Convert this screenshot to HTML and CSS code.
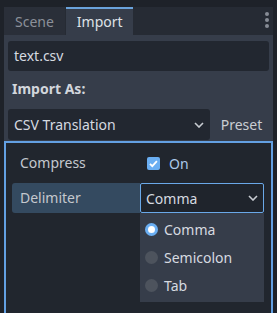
FILE: index.html
```html
<!DOCTYPE html>
<html>
<head>
	<title>Import</title>
	<link rel="stylesheet" href="styles.css">
</head>
<body>
	<div class="dock">
		<div class="tabs">
			<div class="tab">Scene</div>
			<div class="tab tab-active">Import</div>
			<div class="tab-fill">
				<div class="dots"><i></i><i></i><i></i></div>
			</div>
		</div>

		<div class="panel">
			<div class="field">text.csv</div>
			<div class="heading">Import As:</div>
			<div class="import-row">
				<div class="select select-wide">
					<span>CSV Translation</span>
					<svg class="chevron" width="10" height="6" viewBox="0 0 10 6"><path d="M1 1l4 4 4-4" fill="none" stroke="#c8ccd2" stroke-width="1.6"/></svg>
				</div>
				<div class="preset">Preset</div>
			</div>

			<div class="options">
				<div class="prop">
					<div class="prop-name">Compress</div>
					<div class="prop-value">
						<span class="check">
							<svg width="13" height="13" viewBox="0 0 13 13"><rect width="13" height="13" rx="2" fill="#6aaef2"/><path d="M3 6.8l2.3 2.3 4.6-5" fill="none" stroke="#fff" stroke-width="1.8"/></svg>
						</span>
						<span class="check-label">On</span>
					</div>
				</div>
				<div class="prop prop-selected">
					<div class="prop-name">Delimiter</div>
					<div class="prop-value">
						<div class="select select-open">
							<span>Comma</span>
							<svg class="chevron" width="10" height="6" viewBox="0 0 10 6"><path d="M1 1l4 4 4-4" fill="none" stroke="#c8ccd2" stroke-width="1.6"/></svg>
						</div>
						<ul class="popup">
							<li><span class="radio radio-on"></span>Comma</li>
							<li><span class="radio"></span>Semicolon</li>
							<li><span class="radio"></span>Tab</li>
						</ul>
					</div>
				</div>
			</div>
		</div>
	</div>
</body>
</html>
```

FILE: styles.css
```css
html, body {
	margin: 0;
	height: 100%;
	background-color: #1e2229;
	font-family: "Noto Sans", sans-serif;
	font-size: 14px;
	color: #d6dae0;
	overflow: hidden;
}

.dock {
	padding: 7px 4px 0 4px;
	height: 100%;
	box-sizing: border-box;
	display: flex;
	flex-direction: column;
}

.tabs {
	display: flex;
	height: 28px;
	background-color: #262b34;
}

.tab {
	display: flex;
	align-items: center;
	padding: 0 11px;
	color: #8b9099;
	background-color: #2a2f39;
	margin-right: 1px;
}

.tab-active {
	color: #dfe2e7;
	background-color: #363d4a;
	border-top: 2px solid #6aa3dc;
	padding: 0 10px 2px 11px;
}

.tab-fill {
	flex: 1;
	position: relative;
}

.dots {
	position: absolute;
	right: 4px;
	top: 5px;
	display: flex;
	flex-direction: column;
	gap: 2px;
}

.dots i {
	display: block;
	width: 4px;
	height: 4px;
	border-radius: 2px;
	background-color: #878c95;
}

.panel {
	flex: 1;
	background-color: #363d4a;
	padding-top: 6px;
	display: flex;
	flex-direction: column;
}

.field {
	margin: 0 4px;
	height: 30px;
	line-height: 30px;
	padding-left: 6px;
	background-color: #222730;
	border-radius: 3px;
}

.heading {
	height: 38px;
	line-height: 36px;
	padding-left: 8px;
	font-weight: bold;
	color: #d2d6dc;
}

.import-row {
	display: flex;
	align-items: center;
	padding: 0 4px;
	height: 31px;
}

.select {
	display: flex;
	align-items: center;
	justify-content: space-between;
	box-sizing: border-box;
	height: 31px;
	padding: 0 6px;
	background-color: #222730;
	border-radius: 3px;
}

.select-wide {
	width: 202px;
}

.preset {
	flex: 1;
	padding-left: 4px;
	text-align: center;
	color: #c9cdd3;
}

.options {
	flex: 1;
	margin-top: 1px;
	border: 2px solid #63a0e2;
	border-bottom: none;
	background-color: #21262e;
	padding: 5px 7px 0 6px;
	display: flex;
	flex-direction: column;
	gap: 5px;
}

.prop {
	display: flex;
	height: 30px;
}

.prop-name {
	width: 128px;
	padding-left: 8px;
	box-sizing: border-box;
	line-height: 30px;
	color: #c4c8ce;
}

.prop-selected .prop-name {
	background-color: #344a60;
	border-radius: 3px 0 0 3px;
}

.prop-value {
	flex: 1;
	display: flex;
	align-items: center;
	position: relative;
}

.check {
	margin-left: 7px;
	display: flex;
}

.check-label {
	margin-left: 9px;
	color: #aac9ea;
}

.select-open {
	width: 100%;
	height: 30px;
	border: 1px solid #6aa8e8;
	border-radius: 2px;
	padding: 0 5px;
	background-color: #1f242c;
}

.popup {
	position: absolute;
	top: 30px;
	left: 0;
	right: 0;
	margin: 0;
	padding: 2px 0 3px;
	list-style: none;
	background-color: #363d4a;
}

.popup li {
	height: 28px;
	display: flex;
	align-items: center;
	padding-left: 5px;
	color: #d6dae0;
}

.radio {
	width: 13px;
	height: 13px;
	border-radius: 50%;
	background-color: #4d535d;
	margin-right: 6px;
	box-sizing: border-box;
}

.radio-on {
	background-color: #ffffff;
	border: 3px solid #6aaef2;
}
```
